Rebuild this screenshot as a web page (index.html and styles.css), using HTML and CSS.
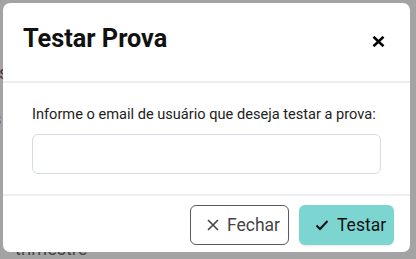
FILE: index.html
```html
<!DOCTYPE html>
<html lang="pt-BR">
<head>
  <meta charset="UTF-8" />
  <title>Testar Prova</title>
  <link rel="stylesheet" href="styles.css">
</head>
<body>
<section class="page">
  <p class="behind behind-a">Is</p>
  <p class="behind behind-b">s</p>
  <p class="behind behind-c">trimestre</p>
</section>
<div class="overlay">
  <div class="modal">
    <div class="modal-header">
      <h2>Testar Prova</h2>
      <button class="close" type="button" aria-label="Fechar">
        <svg width="13" height="11" viewBox="0 0 13 11">
          <path d="M1.5 0.8 L11.5 10.2 M11.5 0.8 L1.5 10.2" stroke="#000" stroke-width="2.6" />
        </svg>
      </button>
    </div>
    <div class="modal-body">
      <label for="email">Informe o email de usuário que deseja testar a prova:</label>
      <input type="text" id="email" />
    </div>
    <div class="modal-footer">
      <button class="btn btn-close" type="button">
        <svg width="12" height="12" viewBox="0 0 12 12">
          <path d="M1 1 L11 11 M11 1 L1 11" stroke="#444" stroke-width="1.6" />
        </svg>
        Fechar
      </button>
      <button class="btn btn-ok" type="button">
        <svg width="14" height="12" viewBox="0 0 14 12">
          <path d="M1.5 6.5 L5 10 L12.5 2" stroke="#111" stroke-width="2" fill="none" />
        </svg>
        Testar
      </button>
    </div>
  </div>
</div>
</body>
</html>
```

FILE: styles.css
```css
body {
  margin: 0;
  background-color: #a3a3a3;
  font-family: Roboto, "Liberation Sans", sans-serif;
  width: 416px;
  height: 259px;
  overflow: hidden;
  position: relative;
}
.page {
  height: 259px;
}
.behind {
  position: absolute;
  margin: 0;
  color: #3b3b3b;
  font-size: 18px;
}
.behind-a {
  left: -6px;
  top: 62px;
}
.behind-b {
  left: -8px;
  top: 108px;
}
.behind-c {
  left: 15px;
  top: 238px;
  color: #444;
}
.overlay {
  position: absolute;
  inset: 0;
}
.modal {
  position: absolute;
  left: 3px;
  top: 3px;
  width: 407px;
  height: 249px;
  background-color: #fff;
  border-radius: 7px;
  display: flex;
  flex-direction: column;
  box-sizing: border-box;
}
.modal-header {
  display: flex;
  align-items: center;
  justify-content: space-between;
  padding: 0 25px 7px 20px;
  box-sizing: border-box;
  height: 80px;
  border-bottom: 2px solid #eceef1;
}
.modal-header h2 {
  margin: 0;
  font-size: 25.3px;
  font-weight: 700;
  color: #111;
}
.close {
  border: none;
  background: none;
  padding: 0;
  display: flex;
  margin-top: 6px;
}
.modal-body {
  padding: 22px 29px 20px 29px;
  display: flex;
  flex-direction: column;
  gap: 11px;
  border-bottom: 2px solid #eceef1;
}
.modal-body label {
  font-size: 14.6px;
  color: #222;
}
.modal-body input {
  height: 40px;
  box-sizing: border-box;
  border: 1px solid #d5dbe6;
  border-radius: 6px;
  font-family: Roboto, "Liberation Sans", sans-serif;
}
.modal-footer {
  display: flex;
  justify-content: flex-end;
  gap: 10px;
  padding: 9px 16px 0 0;
}
.btn {
  height: 40px;
  border-radius: 6px;
  font-family: Roboto, "Liberation Sans", sans-serif;
  font-size: 17.5px;
  display: flex;
  align-items: center;
  gap: 8px;
  box-sizing: border-box;
}
.btn-close {
  width: 99px;
  padding: 0 0 0 16px;
  background-color: #fff;
  border: 1.5px solid #5a5a5a;
  color: #444;
}
.btn-ok {
  width: 95px;
  padding: 0 0 0 16px;
  background-color: #7dd5d2;
  border: none;
  color: #111;
  box-shadow: 0 1px 2px rgba(0, 0, 0, 0.1);
}
```
